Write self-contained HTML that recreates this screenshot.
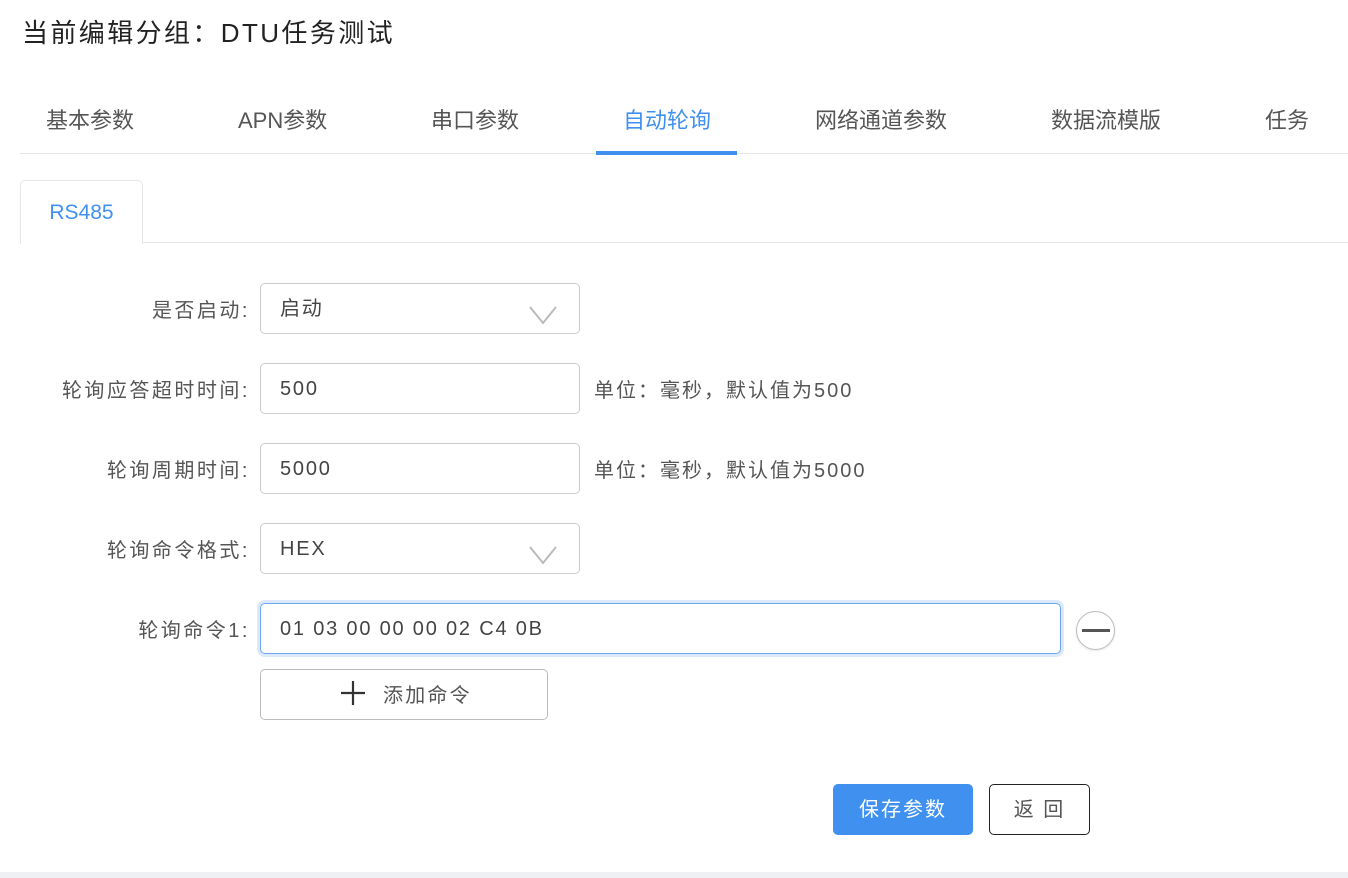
<!DOCTYPE html>
<html><head><meta charset="utf-8"><style>
*{box-sizing:border-box;margin:0;padding:0}
body{width:1348px;height:878px;background:#fff;font-family:"Liberation Sans","Noto Sans CJK SC",sans-serif;color:#333;position:relative;overflow:hidden}
.a{position:absolute}
.title{left:22px;top:15px;font-size:26px;color:#222;line-height:36px;letter-spacing:2.4px}
.tab{top:105px;font-size:22px;color:#555;line-height:32px;white-space:nowrap}
.lbl{font-size:20px;color:#555;text-align:right;width:250px;left:0;line-height:50px;letter-spacing:2.5px;padding-top:2px}
.inp{left:260px;width:320px;height:51px;border:1px solid #ccc;border-radius:5px;font-size:20px;color:#444;padding-left:19px;line-height:51px;letter-spacing:1.8px}
.hint{left:594px;font-size:20px;color:#555;line-height:50px;letter-spacing:2px;padding-top:2px}
.chev{position:absolute;right:22px;top:22px;width:28px;height:18px}
</style></head><body>
<div class="a title">当前编辑分组：DTU任务测试</div>
<div class="a tab" style="left:46px">基本参数</div>
<div class="a tab" style="left:238px">APN参数</div>
<div class="a tab" style="left:431px">串口参数</div>
<div class="a tab" style="left:623px;color:#4090f0">自动轮询</div>
<div class="a tab" style="left:815px">网络通道参数</div>
<div class="a tab" style="left:1051px">数据流模版</div>
<div class="a tab" style="left:1265px">任务</div>
<div class="a" style="left:20px;top:153px;width:1328px;height:1px;background:#e6e6e6"></div>
<div class="a" style="left:596px;top:151px;width:141px;height:4px;background:#4090f0"></div>
<div class="a" style="left:20px;top:242px;width:1328px;height:1px;background:#e6e6e6"></div>
<div class="a" style="left:20px;top:180px;width:123px;height:64px;border:1px solid #e6e6e6;border-bottom:none;border-radius:5px 5px 0 0;background:#fff;color:#4090f0;font-size:21px;text-align:center;line-height:64px">RS485</div>

<div class="a lbl" style="top:284px">是否启动:</div>
<div class="a inp" style="top:283px">启动<svg class="chev" viewBox="0 0 28 18"><path d="M1 1L14 17L27 1" fill="none" stroke="#bbb" stroke-width="2"/></svg></div>
<div class="a lbl" style="top:364px">轮询应答超时时间:</div>
<div class="a inp" style="top:363px">500</div>
<div class="a hint" style="top:364px">单位：毫秒，默认值为500</div>
<div class="a lbl" style="top:444px">轮询周期时间:</div>
<div class="a inp" style="top:443px">5000</div>
<div class="a hint" style="top:444px">单位：毫秒，默认值为5000</div>
<div class="a lbl" style="top:524px">轮询命令格式:</div>
<div class="a inp" style="top:523px">HEX<svg class="chev" viewBox="0 0 28 18"><path d="M1 1L14 17L27 1" fill="none" stroke="#bbb" stroke-width="2"/></svg></div>
<div class="a lbl" style="top:604px">轮询命令1:</div>
<div class="a inp" style="top:603px;width:801px;border-color:#6aa8f0;box-shadow:0 0 0 3px #dbe9fb">01 03 00 00 00 02 C4 0B</div>
<div class="a" style="left:1076px;top:611px;width:39px;height:39px;border:1px solid #bbb;border-radius:50%;box-shadow:0 1px 2px rgba(0,0,0,.1)"><div style="position:absolute;left:5px;top:17px;width:28px;height:3px;background:#555"></div></div>
<div class="a" style="left:260px;top:669px;width:288px;height:51px;border:1px solid #bbb;border-radius:5px;font-size:20px;color:#555;line-height:53px;padding-left:122px;letter-spacing:2.2px">添加命令</div>
<svg class="a" style="left:340px;top:680px" width="26" height="26"><path d="M13 1V25M1 13H25" stroke="#333" stroke-width="2.2"/></svg>
<div class="a" style="left:833px;top:784px;width:140px;height:51px;background:#4090f0;border-radius:5px;color:#fff;font-size:20px;text-align:center;line-height:53px;letter-spacing:2px">保存参数</div>
<div class="a" style="left:989px;top:784px;width:101px;height:51px;border:1px solid #222;border-radius:5px;color:#555;font-size:20px;text-align:center;line-height:51px;letter-spacing:2px">返 回</div>
<div class="a" style="left:0;top:872px;width:1348px;height:6px;background:#eef0f3"></div>
</body></html>
